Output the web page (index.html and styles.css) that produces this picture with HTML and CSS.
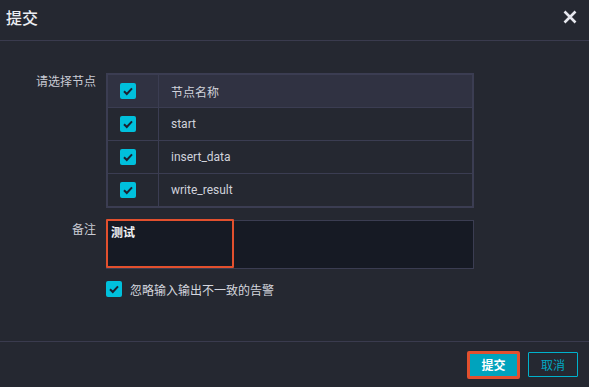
FILE: index.html
```html
<!DOCTYPE html>
<html lang="zh">
<head>
<meta charset="utf-8">
<title>提交</title>
<link rel="stylesheet" href="styles.css">
</head>
<body>
<div class="dialog">
  <div class="header">
    <span class="title">提交</span>
    <svg class="close" width="14" height="14" viewBox="0 0 14 14"><path d="M1.5 1.5 L12.5 12.5 M12.5 1.5 L1.5 12.5" stroke="#e6e7ee" stroke-width="2.6" fill="none"/></svg>
  </div>
  <div class="body">
    <div class="form-row">
      <div class="label">请选择节点</div>
      <div class="table">
        <div class="tr th">
          <div class="td-check"><span class="cb"><svg width="16" height="16" viewBox="0 0 16 16"><path d="M4 8.2 L6.8 11 L12 5.4" stroke="#1c2030" stroke-width="2" fill="none"/></svg></span></div>
          <div class="td-name">节点名称</div>
        </div>
        <div class="tr">
          <div class="td-check"><span class="cb"><svg width="16" height="16" viewBox="0 0 16 16"><path d="M4 8.2 L6.8 11 L12 5.4" stroke="#1c2030" stroke-width="2" fill="none"/></svg></span></div>
          <div class="td-name">start</div>
        </div>
        <div class="tr">
          <div class="td-check"><span class="cb"><svg width="16" height="16" viewBox="0 0 16 16"><path d="M4 8.2 L6.8 11 L12 5.4" stroke="#1c2030" stroke-width="2" fill="none"/></svg></span></div>
          <div class="td-name">insert_data</div>
        </div>
        <div class="tr">
          <div class="td-check"><span class="cb"><svg width="16" height="16" viewBox="0 0 16 16"><path d="M4 8.2 L6.8 11 L12 5.4" stroke="#1c2030" stroke-width="2" fill="none"/></svg></span></div>
          <div class="td-name">write_result</div>
        </div>
      </div>
    </div>
    <div class="form-row row-note">
      <div class="label label-note">备注</div>
      <div class="note">
        <div class="note-text">测试</div>
        <div class="highlight"></div>
      </div>
    </div>
    <div class="form-row row-ignore">
      <div></div>
      <div class="ignore">
        <span class="cb"><svg width="16" height="16" viewBox="0 0 16 16"><path d="M4 8.2 L6.8 11 L12 5.4" stroke="#1c2030" stroke-width="2" fill="none"/></svg></span>
        <span class="ignore-text">忽略输入输出不一致的告警</span>
      </div>
    </div>
  </div>
  <div class="footer">
    <div class="btn-submit-wrap"><span class="btn-submit">提交</span></div>
    <span class="btn-cancel">取消</span>
  </div>
</div>
</body>
</html>
```
FILE: styles.css
```css
html, body {
  margin: 0;
  padding: 0;
  background: #252831;
}
body {
  font-family: "Roboto", "Noto Sans CJK SC", sans-serif;
  color: #cfd1da;
}
.dialog {
  width: 589px;
  height: 387px;
  display: flex;
  flex-direction: column;
  background: #252831;
}
.header {
  height: 41px;
  box-sizing: border-box;
  border-bottom: 1px solid #3a3b4e;
  padding: 0 12px 6px 6px;
  display: flex;
  align-items: center;
  justify-content: space-between;
}
.title {
  font-family: "Noto Sans CJK SC", sans-serif;
  font-size: 16px;
  line-height: 20px;
  color: #eceef3;
  font-weight: 500;
}
.close {
  display: block;
}
.body {
  flex: 1;
  padding-top: 32px;
}
.form-row {
  display: grid;
  grid-template-columns: 96px 368px;
  column-gap: 10px;
}
.label {
  font-family: "Noto Sans CJK SC", sans-serif;
  font-size: 12px;
  line-height: 16px;
  text-align: right;
  color: #c9cbd4;
}
.table {
  border: 2px solid #3b3d52;
}
.tr {
  height: 32px;
  display: flex;
  border-top: 1px solid #3b3d52;
}
.tr.th {
  border-top: none;
  background: #303242;
}
.td-check {
  width: 51px;
  padding-left: 12px;
  box-sizing: border-box;
  border-right: 1px solid #3b3d52;
  display: flex;
  align-items: center;
}
.td-name {
  padding-left: 12px;
  display: flex;
  align-items: center;
  font-size: 12px;
  color: #d0d2db;
}
.cb {
  width: 16px;
  height: 16px;
  border-radius: 2px;
  background: #00c0dc;
  display: inline-block;
  flex: none;
}
.cb svg {
  display: block;
}
.row-note {
  margin-top: 12px;
}
.label-note {
  padding-top: 1px;
}
.note {
  position: relative;
  height: 49px;
  box-sizing: border-box;
  border: 1px solid #3b3d52;
  background: #161a24;
}
.note-text {
  font-family: "Noto Sans CJK SC", sans-serif;
  font-size: 12px;
  font-weight: 700;
  line-height: 16px;
  color: #f0f1f5;
  padding: 3px 0 0 4px;
}
.highlight {
  position: absolute;
  left: -1px;
  top: -2px;
  width: 128px;
  height: 49px;
  box-sizing: border-box;
  border: 2px solid #e2502e;
  border-radius: 1px;
}
.row-ignore {
  margin-top: 12px;
}
.ignore {
  display: flex;
  align-items: center;
  gap: 8px;
  height: 16px;
}
.ignore-text {
  font-family: "Noto Sans CJK SC", sans-serif;
  font-size: 12px;
  color: #d4d6de;
}
.footer {
  height: 46px;
  box-sizing: border-box;
  border-top: 1px solid #3a3b4e;
  display: flex;
  justify-content: flex-end;
  align-items: center;
  padding: 0 11px 0 0;
  gap: 8px;
}
.btn-submit-wrap {
  border: 3px solid #e2502e;
  border-radius: 2px;
  width: 53px;
  height: 28px;
  box-sizing: border-box;
  display: flex;
}
.btn-submit {
  flex: 1;
  background: #00a3bd;
  color: #ffffff;
  font-family: "Noto Sans CJK SC", sans-serif;
  font-size: 12px;
  font-weight: 700;
  display: flex;
  align-items: center;
  justify-content: center;
}
.btn-cancel {
  width: 50px;
  height: 25px;
  box-sizing: border-box;
  border: 1px solid #00b2cd;
  border-radius: 1px;
  color: #00a9c4;
  font-family: "Noto Sans CJK SC", sans-serif;
  font-size: 12px;
  display: flex;
  align-items: center;
  justify-content: center;
}
```
